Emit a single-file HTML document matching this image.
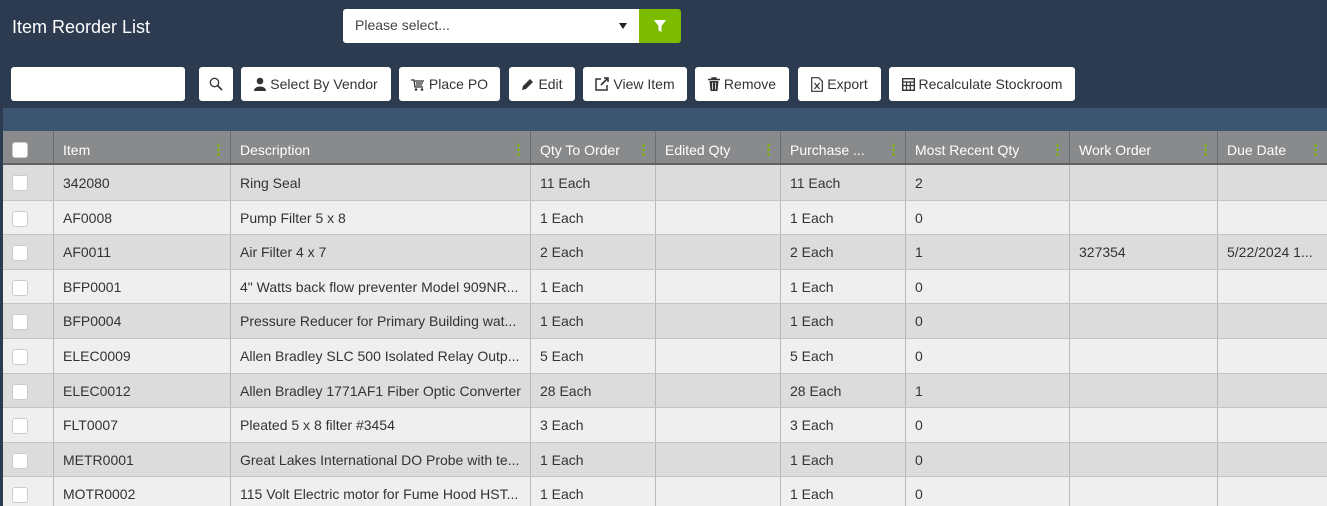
<!DOCTYPE html>
<html><head><style>
*{box-sizing:border-box;margin:0;padding:0}
html,body{width:1327px;height:506px;overflow:hidden}
body{background:#2c3b4f;font-family:"Liberation Sans",sans-serif;font-size:14px;color:#333;position:relative}
.a{position:absolute}
.title{left:12px;top:17px;color:#fff;font-size:18px}
.sel{left:343px;top:9px;width:296px;height:34px;background:#fff;border-radius:3px 0 0 3px;padding:8px 12px;color:#444}
.sel:after{content:"";position:absolute;right:12px;top:14px;border:4px solid transparent;border-top:6px solid #222}
.flt{left:639px;top:9px;width:42px;height:34px;background:#7cbb00;border-radius:0 3px 3px 0}
.btn{top:67px;height:34px;background:#fff;border-radius:3px;display:flex;align-items:center;justify-content:center;gap:4px;color:#333}
.band{left:3px;top:108px;width:1324px;height:23px;background:#3d566f}
.hdr{left:3px;top:131px;width:1324px;height:34px;background:#898a8c;border-bottom:2px solid #5f6164}
.c{position:absolute;top:0;height:100%;padding-left:9px;display:flex;align-items:center;white-space:nowrap;overflow:hidden;border-left:1px solid #b9b9b9}
.hdr .c{color:#fff;border-left:1px solid #6b6c6e;padding-top:5px}
.dots{position:absolute;right:10px;top:12px;width:3px;height:14px;background:radial-gradient(circle,#7cbb00 1.2px,transparent 1.4px) 0 0/3px 4.6px}
.row{left:3px;width:1324px;height:35px;border-top:1px solid #c4c4c4}
.cb{position:absolute;left:9px;top:10px;width:16px;height:16px;background:#fff;border:1px solid #ccc;border-radius:3px}
</style></head><body>
<div class="a title">Item Reorder List</div>
<div class="a sel">Please select...</div>
<div class="a flt"><svg width="42" height="34"><path d="M15 11h12l-4.5 6v6l-3-1.5v-4.5z" fill="#fff"/></svg></div>
<div class="a" style="left:11px;top:67px;width:174px;height:34px;background:#fff;border-radius:3px"></div>
<div class="a btn" style="left:199px;width:34px"><svg width="14" height="14"><circle cx="5.5" cy="5.5" r="4.2" fill="none" stroke="#333" stroke-width="1.3"/><path d="M8.5 8.5l4.5 4.5" stroke="#333" stroke-width="1.6"/></svg></div>
<div class="a btn" style="left:241px;width:150px"><svg width="12" height="14"><circle cx="6" cy="4" r="3.3" fill="#333"/><path d="M0 14c0-6 12-6 12 0z" fill="#333"/></svg>Select By Vendor</div>
<div class="a btn" style="left:399px;width:101px"><svg width="14" height="13"><path d="M0 2h3l1 7h8M4 3h9M5 5h7M5 7h6" stroke="#333" stroke-width="1.3" fill="none"/><circle cx="5" cy="11.5" r="1.3" fill="#333"/><circle cx="11" cy="11.5" r="1.3" fill="#333"/></svg>Place PO</div>
<div class="a btn" style="left:509px;width:66px"><svg width="13" height="13"><path d="M1 12l1-4 7-7 3 3-7 7z" fill="#333"/></svg>Edit</div>
<div class="a btn" style="left:583px;width:104px"><svg width="14" height="14"><path d="M6 2H1v11h11V8" stroke="#333" stroke-width="1.5" fill="none"/><path d="M6 8l7-7M9 1h4v4" stroke="#333" stroke-width="1.6" fill="none"/></svg>View Item</div>
<div class="a btn" style="left:695px;width:94px"><svg width="12" height="14"><path d="M0 2.5h12M4 2.5V1h4v1.5" stroke="#333" stroke-width="1.4" fill="none"/><path d="M1.5 4h9l-1 10h-7z" fill="#333"/><path d="M4.5 5.5v7M7.5 5.5v7" stroke="#fff" stroke-width=".8"/></svg>Remove</div>
<div class="a btn" style="left:798px;width:83px"><svg width="12" height="15"><path d="M.7.7h7l3.6 3.6v10H.7z" stroke="#333" stroke-width="1.2" fill="none"/><path d="M3.5 6l5 6M8.5 6l-5 6" stroke="#333" stroke-width="1.2"/></svg>Export</div>
<div class="a btn" style="left:889px;width:186px"><svg width="13" height="13"><rect x=".7" y=".7" width="11.6" height="11.6" stroke="#333" stroke-width="1.4" fill="none"/><path d="M1 4h11M1 7.5h11M4.5 4v8M8.3 4v8" stroke="#333" stroke-width="1.2"/></svg>Recalculate Stockroom</div>
<div class="a band"></div>
<div class="a hdr">
<div class="cb" style="top:11px"></div>
<div class="c" style="left:50px;width:177px">Item<span class="dots"></span></div>
<div class="c" style="left:227px;width:300px">Description<span class="dots"></span></div>
<div class="c" style="left:527px;width:125px">Qty To Order<span class="dots"></span></div>
<div class="c" style="left:652px;width:125px">Edited Qty<span class="dots"></span></div>
<div class="c" style="left:777px;width:125px">Purchase ...<span class="dots"></span></div>
<div class="c" style="left:902px;width:164px">Most Recent Qty<span class="dots"></span></div>
<div class="c" style="left:1066px;width:148px">Work Order<span class="dots"></span></div>
<div class="c" style="left:1214px;width:110px">Due Date<span class="dots"></span></div>
</div>
<div class="a row" style="top:165px;background:#dcdcdc;border-top:none"><div class="cb"></div><div class="c" style="left:50px;width:177px">342080</div><div class="c" style="left:227px;width:300px">Ring Seal</div><div class="c" style="left:527px;width:125px">11 Each</div><div class="c" style="left:652px;width:125px"></div><div class="c" style="left:777px;width:125px">11 Each</div><div class="c" style="left:902px;width:164px">2</div><div class="c" style="left:1066px;width:148px"></div><div class="c" style="left:1214px;width:110px"></div></div>
<div class="a row" style="top:199.6px;background:#efefef"><div class="cb"></div><div class="c" style="left:50px;width:177px">AF0008</div><div class="c" style="left:227px;width:300px">Pump Filter 5 x 8</div><div class="c" style="left:527px;width:125px">1 Each</div><div class="c" style="left:652px;width:125px"></div><div class="c" style="left:777px;width:125px">1 Each</div><div class="c" style="left:902px;width:164px">0</div><div class="c" style="left:1066px;width:148px"></div><div class="c" style="left:1214px;width:110px"></div></div>
<div class="a row" style="top:234.2px;background:#dcdcdc"><div class="cb"></div><div class="c" style="left:50px;width:177px">AF0011</div><div class="c" style="left:227px;width:300px">Air Filter 4 x 7</div><div class="c" style="left:527px;width:125px">2 Each</div><div class="c" style="left:652px;width:125px"></div><div class="c" style="left:777px;width:125px">2 Each</div><div class="c" style="left:902px;width:164px">1</div><div class="c" style="left:1066px;width:148px">327354</div><div class="c" style="left:1214px;width:110px">5/22/2024 1...</div></div>
<div class="a row" style="top:268.8px;background:#efefef"><div class="cb"></div><div class="c" style="left:50px;width:177px">BFP0001</div><div class="c" style="left:227px;width:300px">4" Watts back flow preventer Model 909NR...</div><div class="c" style="left:527px;width:125px">1 Each</div><div class="c" style="left:652px;width:125px"></div><div class="c" style="left:777px;width:125px">1 Each</div><div class="c" style="left:902px;width:164px">0</div><div class="c" style="left:1066px;width:148px"></div><div class="c" style="left:1214px;width:110px"></div></div>
<div class="a row" style="top:303.4px;background:#dcdcdc"><div class="cb"></div><div class="c" style="left:50px;width:177px">BFP0004</div><div class="c" style="left:227px;width:300px">Pressure Reducer for Primary Building wat...</div><div class="c" style="left:527px;width:125px">1 Each</div><div class="c" style="left:652px;width:125px"></div><div class="c" style="left:777px;width:125px">1 Each</div><div class="c" style="left:902px;width:164px">0</div><div class="c" style="left:1066px;width:148px"></div><div class="c" style="left:1214px;width:110px"></div></div>
<div class="a row" style="top:338px;background:#efefef"><div class="cb"></div><div class="c" style="left:50px;width:177px">ELEC0009</div><div class="c" style="left:227px;width:300px">Allen Bradley SLC 500 Isolated Relay Outp...</div><div class="c" style="left:527px;width:125px">5 Each</div><div class="c" style="left:652px;width:125px"></div><div class="c" style="left:777px;width:125px">5 Each</div><div class="c" style="left:902px;width:164px">0</div><div class="c" style="left:1066px;width:148px"></div><div class="c" style="left:1214px;width:110px"></div></div>
<div class="a row" style="top:372.6px;background:#dcdcdc"><div class="cb"></div><div class="c" style="left:50px;width:177px">ELEC0012</div><div class="c" style="left:227px;width:300px">Allen Bradley 1771AF1 Fiber Optic Converter</div><div class="c" style="left:527px;width:125px">28 Each</div><div class="c" style="left:652px;width:125px"></div><div class="c" style="left:777px;width:125px">28 Each</div><div class="c" style="left:902px;width:164px">1</div><div class="c" style="left:1066px;width:148px"></div><div class="c" style="left:1214px;width:110px"></div></div>
<div class="a row" style="top:407.2px;background:#efefef"><div class="cb"></div><div class="c" style="left:50px;width:177px">FLT0007</div><div class="c" style="left:227px;width:300px">Pleated 5 x 8 filter #3454</div><div class="c" style="left:527px;width:125px">3 Each</div><div class="c" style="left:652px;width:125px"></div><div class="c" style="left:777px;width:125px">3 Each</div><div class="c" style="left:902px;width:164px">0</div><div class="c" style="left:1066px;width:148px"></div><div class="c" style="left:1214px;width:110px"></div></div>
<div class="a row" style="top:441.8px;background:#dcdcdc"><div class="cb"></div><div class="c" style="left:50px;width:177px">METR0001</div><div class="c" style="left:227px;width:300px">Great Lakes International DO Probe with te...</div><div class="c" style="left:527px;width:125px">1 Each</div><div class="c" style="left:652px;width:125px"></div><div class="c" style="left:777px;width:125px">1 Each</div><div class="c" style="left:902px;width:164px">0</div><div class="c" style="left:1066px;width:148px"></div><div class="c" style="left:1214px;width:110px"></div></div>
<div class="a row" style="top:476.4px;background:#efefef"><div class="cb"></div><div class="c" style="left:50px;width:177px">MOTR0002</div><div class="c" style="left:227px;width:300px">115 Volt Electric motor for Fume Hood HST...</div><div class="c" style="left:527px;width:125px">1 Each</div><div class="c" style="left:652px;width:125px"></div><div class="c" style="left:777px;width:125px">1 Each</div><div class="c" style="left:902px;width:164px">0</div><div class="c" style="left:1066px;width:148px"></div><div class="c" style="left:1214px;width:110px"></div></div>
</body></html>
